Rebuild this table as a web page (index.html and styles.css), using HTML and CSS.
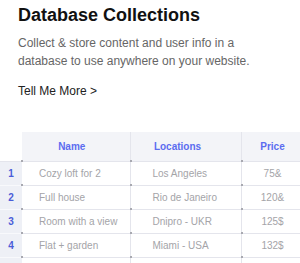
FILE: index.html
```html
<!DOCTYPE html>
<html lang="en">
<head>
    <meta charset="UTF-8">
    <meta name="viewport" content="width=device-width, initial-scale=1.0">
    <title>Database Collections</title>
    <link rel="stylesheet" href="styles.css">
</head>
<body>
    <div class="intro">
        <h2>Database Collections</h2>
        <p>Collect &amp; store content and user info in a database to use anywhere on your website.</p>
        <a class="more" href="#">Tell Me More &gt;</a>
    </div>

    <div class="table-wrap">
        <table class="collection">
            <colgroup>
                <col class="c-num">
                <col class="c-name">
                <col class="c-loc">
                <col class="c-price">
            </colgroup>
            <thead>
                <tr>
                    <th class="num"></th>
                    <th class="col-name">Name</th>
                    <th class="col-loc">Locations</th>
                    <th class="col-price">Price</th>
                </tr>
            </thead>
            <tbody>
                <tr>
                    <td class="num">1</td>
                    <td class="cell">Cozy loft for 2</td>
                    <td class="cell">Los Angeles</td>
                    <td class="cell price">75&amp;</td>
                </tr>
                <tr>
                    <td class="num">2</td>
                    <td class="cell">Full house</td>
                    <td class="cell">Rio de Janeiro</td>
                    <td class="cell price">120&amp;</td>
                </tr>
                <tr>
                    <td class="num">3</td>
                    <td class="cell">Room with a view</td>
                    <td class="cell">Dnipro - UKR</td>
                    <td class="cell price">125$</td>
                </tr>
                <tr>
                    <td class="num">4</td>
                    <td class="cell">Flat + garden</td>
                    <td class="cell">Miami - USA</td>
                    <td class="cell price">132$</td>
                </tr>
                <tr>
                    <td class="num"></td>
                    <td class="cell"></td>
                    <td class="cell"></td>
                    <td class="cell price"></td>
                </tr>
            </tbody>
        </table>
    </div>
</body>
</html>
```

FILE: styles.css
```css
body {
    font-family: "Liberation Sans", Arial, sans-serif;
    background-color: #fff;
    color: #222;
    margin: 0;
    padding: 0;
    overflow: hidden;
}

.intro {
    padding: 4px 18px 0 18px;
}

h2 {
    font-size: 18px;
    line-height: 22px;
    font-weight: bold;
    color: #111;
    margin: 0 0 8px 0;
}

p {
    font-size: 12px;
    line-height: 18px;
    color: #666;
    margin: 0 0 12px 0;
    width: 250px;
}

.more {
    display: block;
    font-size: 12px;
    line-height: 18px;
    color: #222;
    text-decoration: none;
}

.table-wrap {
    margin-top: 32px;
    width: 300px;
    overflow: hidden;
}

.collection {
    border-collapse: collapse;
    table-layout: fixed;
    width: 316px;
    font-size: 10px;
}

.c-num { width: 22px; }
.c-name { width: 108px; }
.c-loc { width: 111px; }
.c-price { width: 75px; }

th, td {
    box-sizing: border-box;
    padding: 0;
}

th {
    height: 29px;
    background-color: #f3f4f8;
    color: #5b6cf0;
    font-weight: bold;
    text-align: center;
    border-right: 1px solid #e4e5ec;
    border-bottom: 1px solid #e4e5ec;
}

th.num {
    background-color: #fff;
    border-right: none;
}

.col-name { padding-right: 8px; }
.col-loc { padding-right: 16px; }
.col-price { padding-right: 12px; }

td {
    height: 24px;
    border-bottom: 1px solid #e4e5ec;
}

td.num {
    background-color: #eef0f6;
    color: #4a5dd8;
    font-weight: bold;
    text-align: center;
    border-bottom: 1px solid #f8f9fc;
}

.cell {
    position: relative;
    color: #a4a4a8;
    padding-left: 17px;
    border-right: 1px solid #e4e5ec;
    white-space: nowrap;
}

.cell + .cell {
    padding-left: 22px;
}

.cell.price {
    padding-left: 0;
    padding-right: 12px;
    text-align: center;
}

.cell::before {
    content: "";
    position: absolute;
    left: -1px;
    top: -2px;
    width: 2px;
    height: 2px;
    background-color: #a8a9b0;
}
```
